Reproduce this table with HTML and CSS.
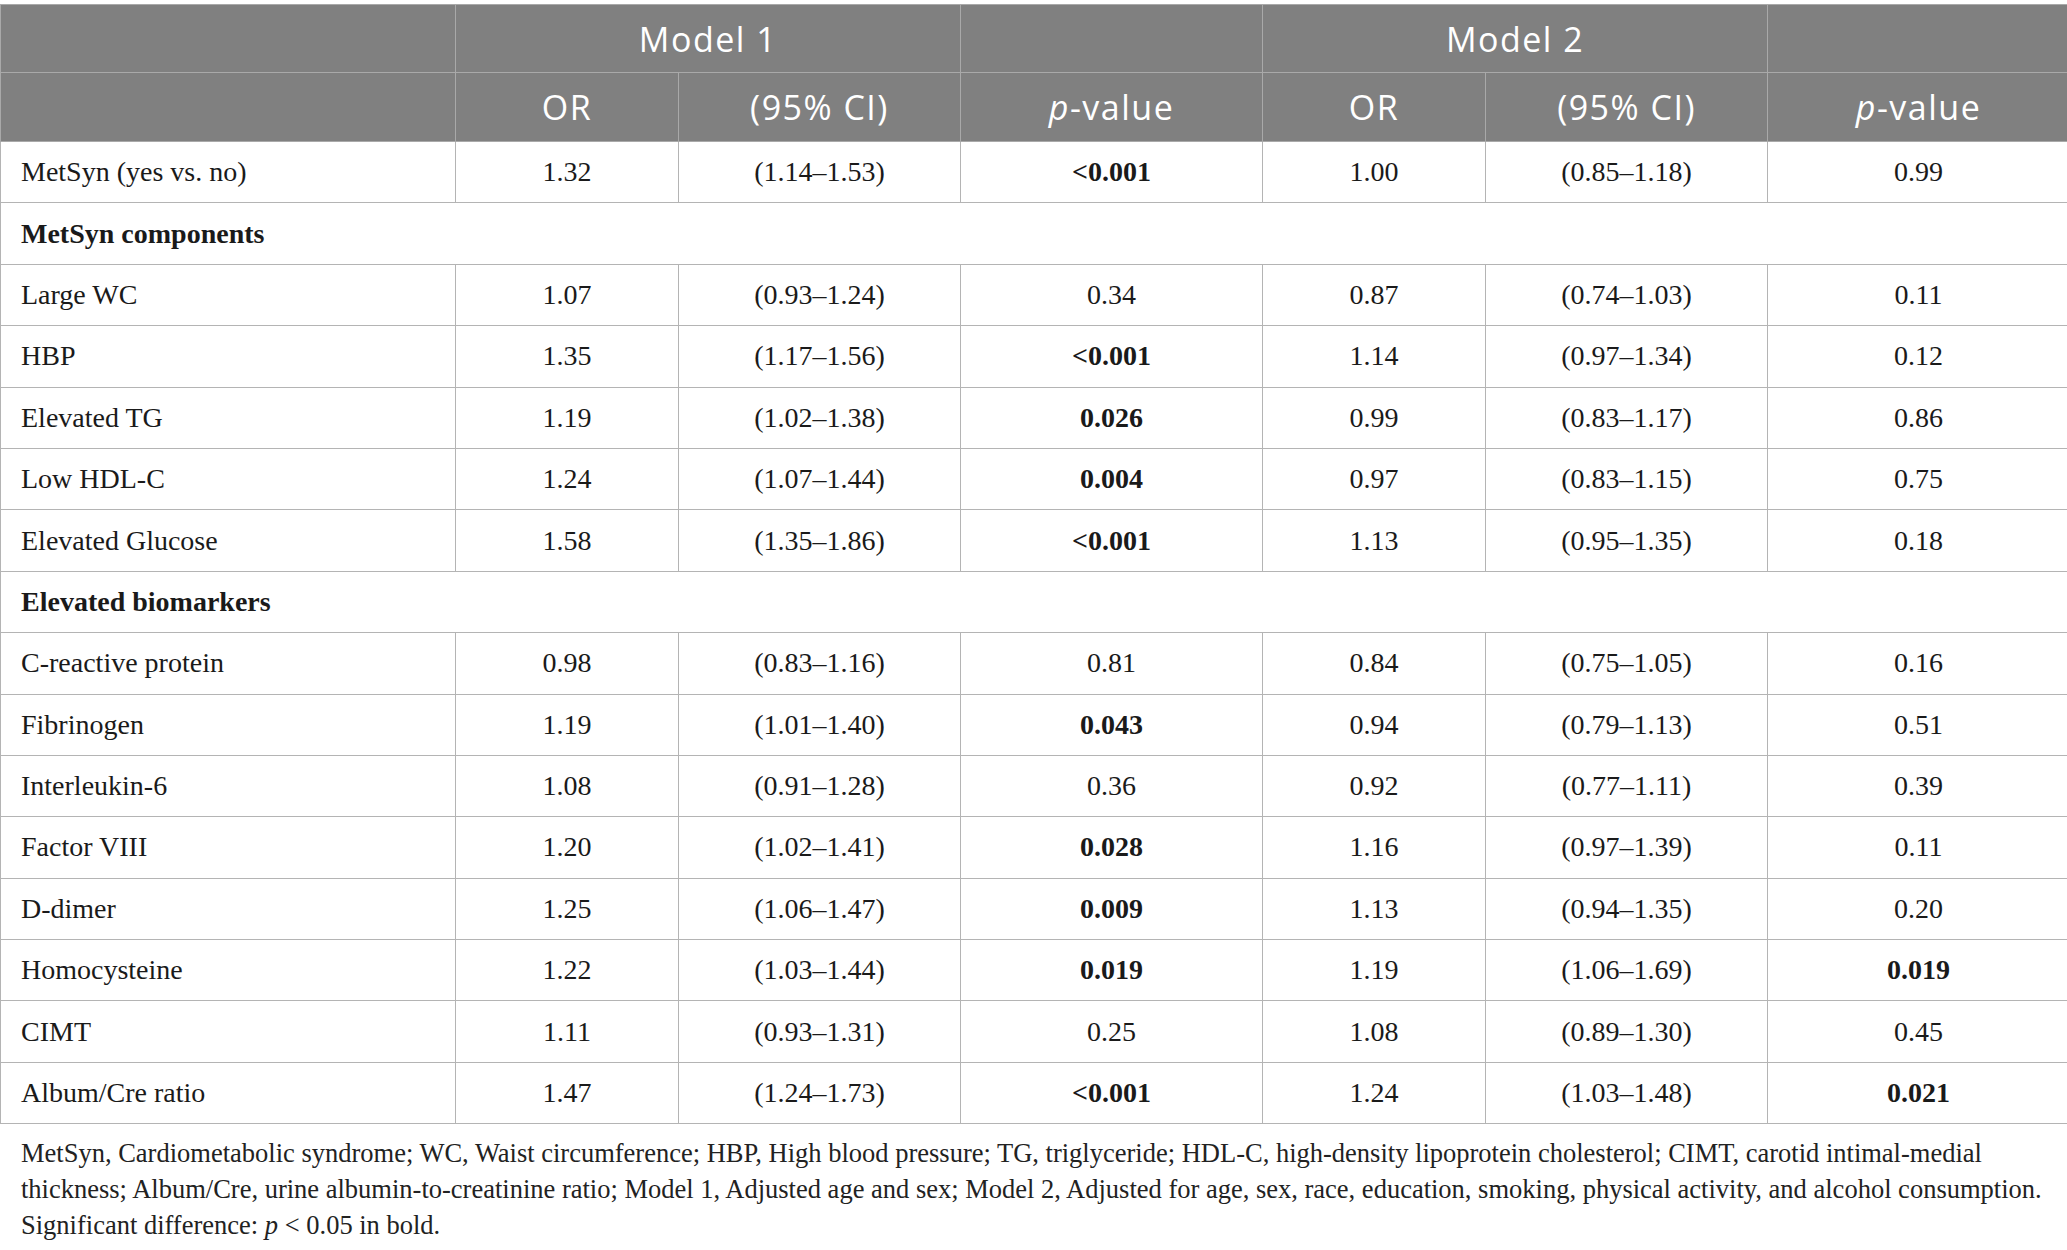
FILE: index.html
```html
<!DOCTYPE html>
<html lang="en">
<head>
    <meta charset="UTF-8">
    <title>MetSyn and elevated biomarkers</title>
    <link rel="stylesheet" href="styles.css">
</head>
<body>
    <table class="results">
        <colgroup>
            <col class="c-label">
            <col class="c-or">
            <col class="c-ci">
            <col class="c-p">
            <col class="c-or">
            <col class="c-ci">
            <col class="c-p">
        </colgroup>
        <thead>
            <tr class="head-top">
                <th></th>
                <th colspan="2">Model 1</th>
                <th></th>
                <th colspan="2">Model 2</th>
                <th></th>
            </tr>
            <tr class="head-sub">
                <th></th>
                <th>OR</th>
                <th>(95% CI)</th>
                <th><i>p</i>-value</th>
                <th>OR</th>
                <th>(95% CI)</th>
                <th><i>p</i>-value</th>
            </tr>
        </thead>
        <tbody>
            <tr><td>MetSyn (yes vs. no)</td><td>1.32</td><td>(1.14–1.53)</td><td><b>&lt;0.001</b></td><td>1.00</td><td>(0.85–1.18)</td><td>0.99</td></tr>
            <tr class="section"><td colspan="7">MetSyn components</td></tr>
            <tr><td>Large WC</td><td>1.07</td><td>(0.93–1.24)</td><td>0.34</td><td>0.87</td><td>(0.74–1.03)</td><td>0.11</td></tr>
            <tr><td>HBP</td><td>1.35</td><td>(1.17–1.56)</td><td><b>&lt;0.001</b></td><td>1.14</td><td>(0.97–1.34)</td><td>0.12</td></tr>
            <tr><td>Elevated TG</td><td>1.19</td><td>(1.02–1.38)</td><td><b>0.026</b></td><td>0.99</td><td>(0.83–1.17)</td><td>0.86</td></tr>
            <tr><td>Low HDL-C</td><td>1.24</td><td>(1.07–1.44)</td><td><b>0.004</b></td><td>0.97</td><td>(0.83–1.15)</td><td>0.75</td></tr>
            <tr><td>Elevated Glucose</td><td>1.58</td><td>(1.35–1.86)</td><td><b>&lt;0.001</b></td><td>1.13</td><td>(0.95–1.35)</td><td>0.18</td></tr>
            <tr class="section"><td colspan="7">Elevated biomarkers</td></tr>
            <tr><td>C-reactive protein</td><td>0.98</td><td>(0.83–1.16)</td><td>0.81</td><td>0.84</td><td>(0.75–1.05)</td><td>0.16</td></tr>
            <tr><td>Fibrinogen</td><td>1.19</td><td>(1.01–1.40)</td><td><b>0.043</b></td><td>0.94</td><td>(0.79–1.13)</td><td>0.51</td></tr>
            <tr><td>Interleukin-6</td><td>1.08</td><td>(0.91–1.28)</td><td>0.36</td><td>0.92</td><td>(0.77–1.11)</td><td>0.39</td></tr>
            <tr><td>Factor VIII</td><td>1.20</td><td>(1.02–1.41)</td><td><b>0.028</b></td><td>1.16</td><td>(0.97–1.39)</td><td>0.11</td></tr>
            <tr><td>D-dimer</td><td>1.25</td><td>(1.06–1.47)</td><td><b>0.009</b></td><td>1.13</td><td>(0.94–1.35)</td><td>0.20</td></tr>
            <tr><td>Homocysteine</td><td>1.22</td><td>(1.03–1.44)</td><td><b>0.019</b></td><td>1.19</td><td>(1.06–1.69)</td><td><b>0.019</b></td></tr>
            <tr><td>CIMT</td><td>1.11</td><td>(0.93–1.31)</td><td>0.25</td><td>1.08</td><td>(0.89–1.30)</td><td>0.45</td></tr>
            <tr><td>Album/Cre ratio</td><td>1.47</td><td>(1.24–1.73)</td><td><b>&lt;0.001</b></td><td>1.24</td><td>(1.03–1.48)</td><td><b>0.021</b></td></tr>
        </tbody>
    </table>

    <p class="footnote">
        MetSyn, Cardiometabolic syndrome; WC, Waist circumference; HBP, High blood pressure; TG, triglyceride; HDL-C, high-density lipoprotein cholesterol; CIMT, carotid intimal-medial thickness; Album/Cre, urine albumin-to-creatinine ratio; Model 1, Adjusted age and sex; Model 2, Adjusted for age, sex, race, education, smoking, physical activity, and alcohol consumption.<br>
        Significant difference: <i>p</i> &lt; 0.05 in bold.
    </p>
</body>
</html>
```

FILE: styles.css
```css
body {
    margin: 0;
    background: #fff;
    color: #1a1a1a;
    font-family: "Liberation Serif", "Times New Roman", serif;
}
.results {
    width: 2067px;
    margin-top: 4px;
    border-collapse: collapse;
    table-layout: fixed;
    font-size: 28px;
}
.c-label { width: 455px; }
.c-or { width: 223px; }
.c-ci { width: 282px; }
.c-p { width: 302px; }
.results th,
.results td {
    border: 1px solid #b4b4b4;
    text-align: center;
    vertical-align: middle;
    padding: 0 20px;
}
.results th {
    background-color: #808080;
    color: #fff;
    border-color: #a9a9a9;
    font-family: "Open Sans", "Noto Sans", sans-serif;
    font-weight: 400;
    font-size: 34px;
    letter-spacing: 1.5px;
}
.head-top th { height: 67px; }
.head-sub th { height: 68px; }
.results td { height: 60.4px; }
.results td:first-child { text-align: left; }
.section td {
    font-weight: bold;
    text-align: left;
}
.footnote {
    margin: 11px 0 0;
    padding: 0 21px;
    font-size: 26.5px;
    line-height: 36px;
    color: #222;
}
```
